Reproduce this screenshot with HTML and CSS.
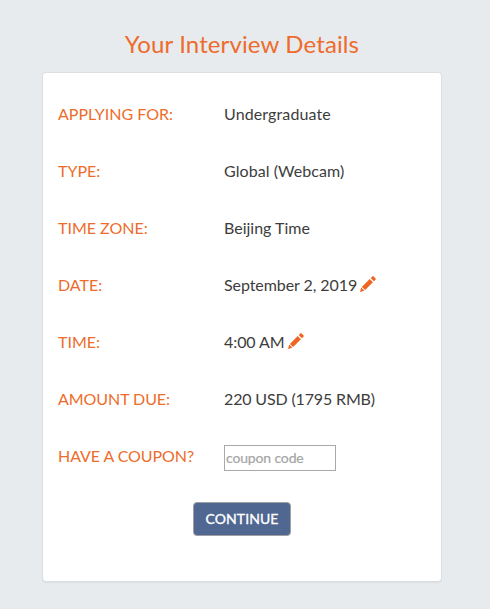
FILE: index.html
```html
<!DOCTYPE html>
<html lang="en">
<head>
<meta charset="utf-8">
<title>Your Interview Details</title>
<link rel="stylesheet" href="styles.css">
</head>
<body>
<main class="page">
<h1 class="title">Your Interview Details</h1>
<form class="card">
<dl class="details">
<dt>APPLYING FOR:</dt><dd class="level">Undergraduate</dd>
<dt>TYPE:</dt><dd class="kind">Global (Webcam)</dd>
<dt>TIME ZONE:</dt><dd>Beijing Time</dd>
<dt>DATE:</dt><dd class="when">September 2, 2019 <svg class="pencil" viewBox="0 0 16 16"><path d="M0 16l1.200-4.400 3.200 3.200zM1.900 10.900L9.700 3.100l3.200 3.200-7.800 7.800zM10.700 2.100L12.400.4q.6-.6 1.200 0l2 2q.6.6 0 1.200l-1.700 1.700z"/></svg></dd>
<dt>TIME:</dt><dd class="when">4:00 AM <svg class="pencil" viewBox="0 0 16 16"><path d="M0 16l1.200-4.400 3.200 3.200zM1.900 10.900L9.700 3.100l3.200 3.200-7.800 7.800zM10.700 2.100L12.400.4q.6-.6 1.200 0l2 2q.6.6 0 1.200l-1.700 1.700z"/></svg></dd>
<dt class="long">AMOUNT DUE:</dt><dd class="amount">220 USD (1795 RMB)</dd>
<dt class="long">HAVE A COUPON?</dt><dd><input class="coupon" type="text" placeholder="coupon code"></dd>
</dl>
<button class="continue" type="button">CONTINUE</button>
</form>
</main>
</body>
</html>
```
FILE: styles.css
```css
* { box-sizing: border-box; }
body { margin: 0; background: #e7ebee; color: #3d3d3d; font: 16px/24px Lato, sans-serif; }
.page { height: 609px; padding: 28px 48px 27px 42px; }
.title { margin: 0 0 12px; color: #ee6c2b; font-size: 24px; line-height: 32px; font-weight: 400; letter-spacing: .12px; text-align: center; }
.card { height: 510px; padding: 12px 15px; background: #fff; border: 1px solid #dcdfe1; border-radius: 4px; box-shadow: 0 1px 1px rgba(0, 0, 0, .05); }
.details { display: grid; grid-template-columns: 166px 1fr; grid-auto-rows: 57px; align-items: center; margin: 0; }
dt { color: #ee6c2b; }
dd { display: flex; align-items: center; gap: 3px; margin: 0; white-space: nowrap; }
.long { letter-spacing: -.07px; }
.level { letter-spacing: .12px; }
.kind { letter-spacing: .06px; }
.when { letter-spacing: -.07px; }
.amount { letter-spacing: -.15px; }
.pencil { width: 16px; height: 16px; margin-bottom: 2px; fill: #ee6420; }
.coupon { width: 112px; height: 26px; margin-top: 4px; padding: 1px; border: 1px solid #a9a9a9; border-radius: 0; font: 14px Lato, sans-serif; letter-spacing: -.15px; }
.coupon::placeholder { color: #a5a5a5; -webkit-text-stroke: .2px #a5a5a5; }
.continue { display: block; width: 98px; height: 34px; margin: 18px auto 0; padding: 0 0 1px; background: #4f6791; color: #fff; border: 1px solid #a0a0a0; border-radius: 4px; font: 14px Lato, sans-serif; letter-spacing: .06px; -webkit-text-stroke: .35px #fff; }
```
